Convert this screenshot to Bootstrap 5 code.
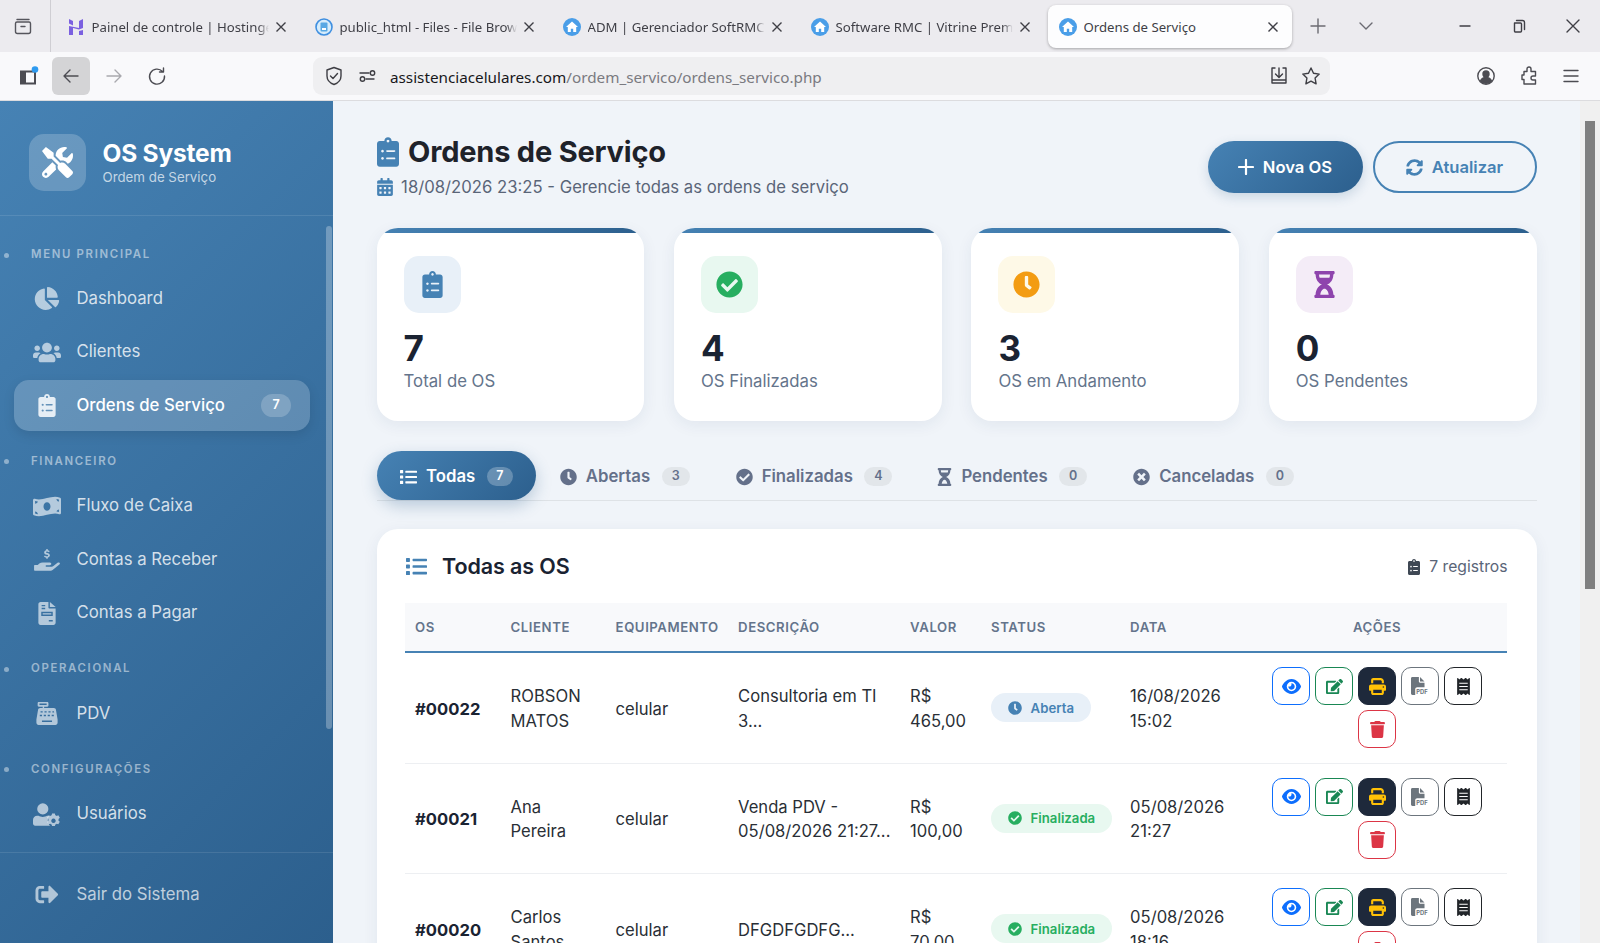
<!DOCTYPE html>
<html lang="pt-BR">
<head>
<meta charset="utf-8">
<title>Ordens de Serviço</title>
<link href="https://cdn.jsdelivr.net/npm/bootstrap@5.3.0/dist/css/bootstrap.min.css" rel="stylesheet">
<style>
html,body{height:943px;overflow:hidden;margin:0}
body{font-family:Inter,"Liberation Sans",sans-serif;background:#f0f4f9;color:#212529;display:flex;flex-direction:column}
svg{fill:currentColor;flex:none;display:block}
/* browser chrome */
.b-tabs{height:52px;background:#ecebef;font-family:"Noto Sans","Liberation Sans",sans-serif;font-size:13.2px;color:#3f3f46;flex:none}
.b-box{width:51px;height:52px;border-right:1px solid #cfced3;color:#55555c;padding-right:4px}
.b-tab{width:244px;height:43px;margin:5px 4px 4px 0;padding:0 13px 0 11px;position:relative;border-radius:8px}
.b-tab.first{margin-left:5px}
.b-tab.on{background:#fdfdfe;box-shadow:0 1px 3px rgba(0,0,0,.3)}
.b-fav{width:18px;height:18px;margin-right:6.5px;margin-top:1px}
.b-txt{flex:1;white-space:nowrap;overflow:hidden;padding-top:2.5px;-webkit-mask-image:linear-gradient(90deg,#000 94%,transparent 100%);mask-image:linear-gradient(90deg,#000 94%,transparent 100%)}
.b-tab.on .b-txt{-webkit-mask-image:none;mask-image:none}
.b-x{width:12px;height:12px;margin-left:6px;color:#3f3f46;fill:none;stroke:currentColor;stroke-width:1.4}
.s-ln{fill:none;stroke:currentColor;stroke-width:1.4;stroke-linecap:round;stroke-linejoin:round}
.b-ctl{width:18px;height:18px;color:#6b6b72}
.b-plus{margin-left:13px;margin-right:30px}
.b-chev{margin-right:81px}
.b-min{margin-right:36px;color:#3f3f46}
.b-res{margin-right:36px;color:#3f3f46}
.b-cl{color:#3f3f46}
.b-bar{height:49px;background:#f9f9fb;border-bottom:1px solid #dcdcdf;flex:none;color:#4c4c52}
.b-ib{width:20px;height:20px}
.b-side{margin-left:19px;margin-right:13px;width:20px}
.b-back{width:38px;height:38px;border-radius:6px;background:#d4d4d6;margin-right:14px}
.b-fwd{color:#a9a9ae;margin-right:23px}
.b-url{width:1017px;height:38px;background:#efeff1;border-radius:9px;margin-left:146px;padding:0 9px 0 11px;font-family:"Noto Sans","Liberation Sans",sans-serif;font-size:15.25px;color:#7a7a80}
.b-url svg{color:#3e3e44}
.b-url b{font-weight:400;color:#17171a}
.b-utxt{padding-top:3px}
.b-url .g1{margin-right:14px}
.b-url .g2{margin-right:12px}
.b-url .g3{margin-right:12px}
.b-acc{margin-left:146px}
.b-ext,.b-mnu{margin-left:22.5px}
/* app */
.app{height:842px;flex:none}
.sidebar{width:333px;background:linear-gradient(135deg,#4682b4,#2c5f8d);color:#fff;flex:none;height:842px}
.side-head{height:115px;padding:33px 0 0 29px;border-bottom:1px solid rgba(255,255,255,.1);flex:none}
.logo-box{width:57px;height:57px;border-radius:15px;background:rgba(255,255,255,.2);margin-right:16.5px}
.logo-box svg{width:31px;height:31px}
.brand{font-size:24.5px;font-weight:700;line-height:30px;letter-spacing:-.2px}
.brand-sub{font-size:13.3px;color:rgba(255,255,255,.7);line-height:18px}
.side-mid{flex:1;min-height:0;overflow:hidden}
.side-nav{flex:1;padding-top:8.5px;overflow:hidden}
.side-bar{width:7px;flex:none}
.side-thumb{width:6px;height:503px;margin-top:10px;border-radius:3px;background:rgba(255,255,255,.28)}
.sec{height:16px;margin:22.5px 0 11px;font-size:11.4px;font-weight:600;letter-spacing:1.66px;color:rgba(255,255,255,.5);text-transform:uppercase}
.sec.s0{margin-bottom:10px}
.sec i{width:5px;height:5px;border-radius:50%;background:rgba(255,255,255,.42);margin:0 22px 0 4px}
.item{height:51px;margin:0 16px 2.5px 14px;padding:0 19px;border-radius:15px;font-size:16.75px;color:rgba(255,255,255,.8);text-decoration:none}
.item svg{width:28px;height:23px;margin-right:15.5px;color:rgba(255,255,255,.62)}
.item.on{background:rgba(255,255,255,.2);color:#fff;font-weight:500;box-shadow:0 4px 12px rgba(0,0,0,.1)}
.item.on svg{color:#e6eef5}
.item-n{width:30px;height:23px;border-radius:12px;background:rgba(255,255,255,.2);font-size:12.5px;font-weight:600;margin-left:auto;margin-right:0}
.side-foot{height:91px;border-top:1px solid rgba(255,255,255,.1);padding-top:16px;flex:none}
.side-foot .item{color:rgba(255,255,255,.7);margin-right:23px}
.main-wrap{flex:1;height:842px;overflow:hidden;min-width:0}
.main{flex:1;min-width:0;overflow:hidden;padding:34px 43.5px 0 43.6px}
.main-bar{width:20px;flex:none;background:#f0f0f0;padding-left:4.5px}
.main-thumb{width:10.5px;height:468px;margin-top:20px;background:#808080}
.ttl{font-size:29px;font-weight:700;line-height:34px;color:#1e222a;margin:0 0 6px;letter-spacing:-.2px}
.ttl svg{width:22px;height:30px;color:#4682b4;margin-right:9.5px}
.subt{font-size:16.7px;line-height:24px;color:#5a6578}
.subt svg{width:16px;height:18px;color:#4682b4;margin-right:8.5px}
.hbtn{height:52px;border-radius:26px;font-size:16.6px;font-weight:600;display:flex;align-items:center;justify-content:center}
.hbtn svg{width:16px;height:16px;margin-right:9px}
.hbtn.a{width:155px;background:linear-gradient(135deg,#4682b4,#2c5f8d);color:#fff;border:0;box-shadow:0 4px 12px rgba(44,95,141,.2)}
.hbtn.b{width:164px;background:transparent;color:#4682b4;border:2px solid #4682b4;margin-left:10px}
.hbtn.b svg{width:17px;height:17px}
.stats{display:grid;grid-template-columns:repeat(4,1fr);gap:29.7px;margin-top:28.5px}
.stat{border:0;border-radius:21px;padding:28.5px 28px 28px 27px;overflow:hidden;box-shadow:0 4px 16px rgba(30,60,100,.07);position:relative;background:#fff}
.stat::before{content:"";position:absolute;left:0;right:0;top:0;height:5px;background:linear-gradient(90deg,#4682b4,#2c5f8d)}
.stat-ic{width:57px;height:57px;border-radius:15px}
.stat-ic svg{width:27px;height:27px}
.sc1{background:#e8f0f8;color:#4682b4}.sc2{background:#e8f8f0;color:#27ae60}.sc3{background:#fef9e7;color:#f39c12}.sc4{background:#f4ecf7;color:#8e44ad}
.stat-n{font-size:35px;font-weight:700;line-height:42px;margin-top:14px;color:#1a2332}
.stat-l{font-size:16.75px;line-height:24px;color:#64748b}
.ptabs{margin-top:30px;border-bottom:1px solid #dee2e6;height:49.5px}
.ptab{height:49px;padding:2px 23px 0;font-size:16.75px;font-weight:600;color:#64708a;border-radius:25px;white-space:nowrap;background:transparent;text-decoration:none}
.ptab svg{width:17px;height:18px;margin-right:9px}
.ptab span{margin-left:11.5px;height:19px;min-width:28px;border-radius:10px;background:#e2e6ea;color:#64708a;font-size:12.5px;font-weight:600;display:flex;align-items:center;justify-content:center}
.ptab.on{color:#fff;background:linear-gradient(135deg,#4682b4,#2c5f8d);box-shadow:0 6px 16px rgba(44,95,141,.28);padding:2px 23.5px 0 23.5px;margin-right:.5px}
.ptab.on span{background:rgba(255,255,255,.25);color:#fff;min-width:26px}
.ptab.tp{margin-left:-1px}
.ptab.tp svg{width:15px}
.tcard{margin-top:28.5px;border:0;border-radius:21px;padding:24px 29px 28px 28.5px;box-shadow:0 4px 16px rgba(30,60,100,.07);background:#fff}
.thead{height:28px;margin-bottom:22px}
.thead h2{font-size:21.5px;font-weight:600;margin:0;color:#1a2332;letter-spacing:-.1px}
.thead h2 svg{width:23px;height:21px;color:#4682b4;margin-right:14px}
.regs{font-size:15.7px;color:#5a6578}
.regs svg{width:12px;height:16px;margin-right:9px;color:#3f4854}
.otable{table-layout:fixed;width:1102px;margin:0;--bs-table-bg:transparent}
.otable th{background:#f8f9fb;font-size:13.2px;font-weight:600;color:#64748b;letter-spacing:.55px;text-transform:uppercase;padding:14px 10px;line-height:20px;border-bottom:2px solid #4682b4;white-space:nowrap}
.otable td{padding:14.25px 10px;font-size:16.6px;line-height:24.5px;vertical-align:middle;border-bottom:1px solid #edeff2;color:#2a2f36}
.otable td.tx{padding-top:16.25px}
.otable td.dsc{white-space:nowrap}
.otable .acts{padding-right:25px}
.otable th.acts{text-align:center}
.oid{font-weight:700;color:#1a2332}
.otable td.oid{color:#1a2332}
.st{display:inline-flex;align-items:center;height:29px;border-radius:15px;padding:0 17px;font-size:13.2px;font-weight:600;white-space:nowrap}
.st svg{width:14px;height:14px;margin-right:8.5px}
.st.ab{background:#e8f0f8;color:#4682b4}
.st.fi{background:#e8f8f0;color:#27ae60}
.acbox{gap:5px}
.ac{width:38px;height:38px;padding:0;border-radius:10px;display:flex;align-items:center;justify-content:center;--bs-btn-bg:#fff}
.ac svg{width:17px;height:17px}
.ac.pr{background:#1e293b;border-color:#1e293b;color:#ffc107}
.ac.pd{color:#6c757d}
.ac.re{color:#212529}
.ac.ey svg{width:19px}
.ac.pd svg{width:18px;height:18px}
</style>
</head>
<body>
<svg width="0" height="0" class="position-absolute">
<defs>
<symbol id="tools" viewBox="0 0 512 512"><path d="M501.1 395.7L384 278.6c-23.1-23.1-57.6-27.6-85.4-13.9L192 158.1V96L64 0 0 64l96 128h62.1l106.6 106.6c-13.6 27.8-9.2 62.3 13.9 85.4l117.1 117.1c14.6 14.6 38.2 14.6 52.7 0l52.7-52.7c14.5-14.6 14.5-38.2 0-52.7zM331.7 225c28.3 0 54.9 11 74.9 31l19.4 19.4c15.8-6.9 30.8-16.5 43.8-29.5 37.1-37.1 49.7-89.3 37.9-136.7-2.2-9-13.5-12.1-20.1-5.5l-74.4 74.4-67.9-11.3L334 98.9l74.4-74.4c6.6-6.6 3.4-17.9-5.7-20.2-47.4-11.7-99.6.9-136.6 37.9-28.5 28.5-41.9 66.1-41.2 103.6l82.1 82.1c8.1-1.9 16.5-2.9 24.7-2.9zm-103.9 82l-56.7-56.7L18.7 402.8c-25 25-25 65.5 0 90.5s65.5 25 90.5 0l123.6-123.6c-7.6-19.9-9.9-41.6-5-62.7zM64 472c-13.2 0-24-10.8-24-24 0-13.3 10.7-24 24-24s24 10.7 24 24c0 13.2-10.7 24-24 24z"/></symbol>
<symbol id="pie" viewBox="0 0 544 512"><path d="M527.79 288H290.5l158.03 158.03c6.04 6.04 15.98 6.53 22.19.68 38.7-36.46 65.32-85.61 73.13-140.86 1.34-9.46-6.51-17.85-16.06-17.85zm-15.83-64.8C503.72 103.74 408.26 8.28 288.8.04 279.68-.59 272 7.1 272 16.24V240h223.77c9.14 0 16.82-7.68 16.19-16.8zM224 288V50.71c0-9.55-8.39-17.4-17.84-16.06C86.99 51.49-4.1 155.6.14 280.37 4.5 408.51 114.83 513.59 243.03 511.98c50.4-.63 96.97-16.87 135.26-44.03 7.9-5.6 8.42-17.23 1.57-24.08L224 288z"/></symbol>
<symbol id="users" viewBox="0 0 640 512"><path d="M96 224c35.3 0 64-28.7 64-64s-28.7-64-64-64-64 28.7-64 64 28.7 64 64 64zm448 0c35.3 0 64-28.7 64-64s-28.7-64-64-64-64 28.7-64 64 28.7 64 64 64zm32 32h-64c-17.6 0-33.5 7.1-45.1 18.6 40.3 22.1 68.9 62 75.1 109.4h66c17.7 0 32-14.3 32-32v-32c0-35.3-28.7-64-64-64zm-256 0c61.9 0 112-50.1 112-112S381.9 32 320 32 208 82.1 208 144s50.1 112 112 112zm76.8 32h-8.3c-20.8 10-43.9 16-68.5 16s-47.6-6-68.5-16h-8.3C179.6 288 128 339.6 128 403.2V432c0 26.5 21.5 48 48 48h288c26.5 0 48-21.5 48-48v-28.8c0-63.6-51.6-115.2-115.2-115.2zm-223.7-13.4C161.5 263.1 145.6 256 128 256H64c-35.3 0-64 28.7-64 64v32c0 17.7 14.3 32 32 32h65.9c6.3-47.4 34.9-87.3 75.2-109.4z"/></symbol>
<symbol id="clip" viewBox="0 0 384 512"><path fill-rule="evenodd" d="M48 64h80c0-35.3 28.7-64 64-64s64 28.7 64 64h80c26.5 0 48 21.5 48 48v352c0 26.5-21.500 48-48 48H48c-26.500 0-48-21.500-48-48V112c0-26.500 21.500-48 48-48zM192 40a24 24 0 1 0 .1 0zM96 216a24 24 0 1 0 .1 0zM96 344a24 24 0 1 0 .1 0zM176 224h128c8.800 0 16 7.200 16 16s-7.200 16-16 16H176c-8.800 0-16-7.200-16-16s7.200-16 16-16zM176 352h128c8.800 0 16 7.200 16 16s-7.200 16-16 16H176c-8.800 0-16-7.200-16-16s7.200-16 16-16z"/></symbol>
<symbol id="money" viewBox="0 0 640 512"><path d="M621.16 54.46C582.37 38.19 543.55 32 504.75 32c-123.17-.01-246.33 62.34-369.5 62.34-30.89 0-61.76-3.92-92.65-13.72-3.47-1.1-6.95-1.62-10.35-1.62C15.04 79 0 92.32 0 110.81v317.26c0 12.63 7.23 24.6 18.84 29.46C57.63 473.81 96.45 480 135.25 480c123.17 0 246.34-62.35 369.51-62.35 30.89 0 61.76 3.92 92.65 13.72 3.47 1.1 6.95 1.62 10.35 1.62 17.21 0 32.25-13.32 32.25-31.81V83.93c-.01-12.64-7.24-24.6-18.85-29.47zM48 132.22c20.12 5.04 41.12 7.57 62.72 8.93C104.84 170.54 79 192.69 48 192.69v-60.47zm0 285v-47.78c34.37 0 62.18 27.27 63.71 61.4-22.53-1.81-43.59-6.31-63.71-13.62zM320 352c-44.19 0-80-42.99-80-96 0-53.02 35.82-96 80-96s80 42.98 80 96c0 53.03-35.83 96-80 96zm272 27.78c-17.52-4.39-35.71-6.85-54.32-8.44 5.87-26.08 27.5-45.88 54.32-49.28v57.72zm0-236.11c-30.89-3.91-54.86-29.7-55.81-61.55 19.54 2.17 38.09 6.23 55.81 12.66v48.89z"/></symbol>
<symbol id="hand" viewBox="0 0 576 512"><path d="M565.300 328.100c-11.800-10.700-30.200-10-42.600 0L430.300 402c-11.300 9.100-25.400 14-40 14H272c-8.800 0-16-7.200-16-16s7.200-16 16-16h78.300c15.900 0 30.700-10.900 33.300-26.600 3.300-20-12.100-37.400-31.600-37.400H192c-27 0-53.100 9.300-74.100 26.300L81.500 376H16c-8.800 0-16 7.200-16 16v96c0 8.800 7.200 16 16 16h356.700c14.500 0 28.600-4.900 40-14l151.200-121c15.200-12.200 16.400-35.100 1.400-40.900z"/><path d="M272 20h32v28c18 3 34 11 45 22l-22 24c-10-9-24-16-40-16-13 0-22 5-22 14 0 8 7 12 26 17 32 8 62 19 62 55 0 28-20 46-49 52v26h-32v-26c-21-3-40-13-52-26l22-24c12 11 28 20 46 20 15 0 25-6 25-16 0-9-8-14-28-19-30-8-60-18-60-53 0-26 19-45 47-50z"/></symbol>
<symbol id="fileinv" viewBox="0 0 384 512"><path fill-rule="evenodd" d="M48 0h176v120c0 13.300 10.700 24 24 24h136v320c0 26.500-21.500 48-48 48H48c-26.500 0-48-21.500-48-48V48C0 21.500 21.500 0 48 0zM72 64h80v32H72zM72 128h80v32H72zM64 216v96h256v-96zM96 248h192v32H96zM232 400h88v32h-88zM256 0l128 112H256z"/></symbol>
<symbol id="cash" viewBox="0 0 512 512"><path fill-rule="evenodd" d="M72 0h192c13 0 24 11 24 24v56c0 13-11 24-24 24h-72v32h216c24 0 45 17 48 40l36 216v72c0 26-22 48-48 48H68c-26 0-48-22-48-48v-72l36-216c3-23 24-40 48-40h56v-32H72c-13 0-24-11-24-24V24C48 11 59 0 72 0zM88 36v32h160V36zM112 204v32h48v-32zM200 204v32h48v-32zM288 204v32h48v-32zM96 284v32h48v-32zM184 284v32h48v-32zM272 284v32h48v-32zM360 284v32h48v-32zM376 204v32h40l-6-32zM144 412v32h224v-32z"/></symbol>
<symbol id="usercog" viewBox="0 0 640 512"><circle cx="224" cy="128" r="128"/><path d="M360 288c-14-1-24-1-40-1-24 12-60 25-96 25s-72-13-96-25h-33C42 287 0 330 0 382v82c0 26 22 48 48 48h342c-32-25-52-62-52-112 0-44 8-82 22-112z"/><path fill-rule="evenodd" d="M500 232l10 40c12 3 22 9 31 16l38-13 34 58-30 27c2 12 2 24 0 36l30 27-34 58-38-13c-9 7-19 13-31 16l-10 40h-64l-10-40c-12-3-22-9-31-16l-38 13-34-58 30-27c-2-12-2-24 0-36l-30-27 34-58 38 13c9-7 19-13 31-16l10-40zM468 350a50 50 0 1 0 .1 0z"/></symbol>
<symbol id="out" viewBox="0 0 512 512"><path d="M497 273L329 441c-15 15-41 4.500-41-17v-96H152c-13.300 0-24-10.700-24-24v-96c0-13.300 10.700-24 24-24h136V88c0-21.400 25.900-32 41-17l168 168c9.300 9.400 9.300 24.600 0 34zM192 436v-40c0-6.600-5.400-12-12-12H96c-17.700 0-32-14.300-32-32V160c0-17.700 14.300-32 32-32h84c6.600 0 12-5.400 12-12V76c0-6.600-5.400-12-12-12H96c-53 0-96 43-96 96v192c0 53 43 96 96 96h84c6.600 0 12-5.400 12-12z"/></symbol>
<symbol id="cal" viewBox="0 0 448 512"><path d="M0 464c0 26.500 21.500 48 48 48h352c26.500 0 48-21.500 48-48V192H0v272zm320-196c0-6.600 5.400-12 12-12h40c6.600 0 12 5.400 12 12v40c0 6.600-5.400 12-12 12h-40c-6.600 0-12-5.400-12-12v-40zm0 128c0-6.600 5.400-12 12-12h40c6.600 0 12 5.400 12 12v40c0 6.600-5.400 12-12 12h-40c-6.600 0-12-5.400-12-12v-40zM192 268c0-6.600 5.400-12 12-12h40c6.600 0 12 5.400 12 12v40c0 6.600-5.400 12-12 12h-40c-6.600 0-12-5.400-12-12v-40zm0 128c0-6.600 5.400-12 12-12h40c6.600 0 12 5.400 12 12v40c0 6.600-5.400 12-12 12h-40c-6.600 0-12-5.400-12-12v-40zM64 268c0-6.600 5.400-12 12-12h40c6.600 0 12 5.400 12 12v40c0 6.600-5.400 12-12 12H76c-6.600 0-12-5.400-12-12v-40zm0 128c0-6.600 5.400-12 12-12h40c6.600 0 12 5.400 12 12v40c0 6.600-5.400 12-12 12H76c-6.600 0-12-5.400-12-12v-40zM400 64h-48V16c0-8.800-7.200-16-16-16h-32c-8.800 0-16 7.200-16 16v48H160V16c0-8.800-7.200-16-16-16h-32c-8.800 0-16 7.200-16 16v48H48C21.500 64 0 85.500 0 112v48h448v-48c0-26.500-21.500-48-48-48z"/></symbol>
<symbol id="plus" viewBox="0 0 16 16"><path d="M8 1v14M1 8h14" fill="none" stroke="currentColor" stroke-width="2.200" stroke-linecap="round"/></symbol>
<symbol id="sync" viewBox="0 0 512 512"><path d="M370.720 133.280C339.458 104.008 298.888 87.962 255.848 88c-77.458.068-144.328 53.178-162.791 126.850-1.344 5.363-6.122 9.150-11.651 9.150H24.103c-7.498 0-13.194-6.807-11.807-14.176C33.933 94.924 134.813 8 256 8c66.448 0 126.791 26.136 171.315 68.685L463.030 40.970C478.149 25.851 504 36.559 504 57.941V192c0 13.255-10.745 24-24 24H345.941c-21.382 0-32.090-25.851-16.971-40.971l41.750-41.749zM32 296h134.059c21.382 0 32.090 25.851 16.971 40.971l-41.750 41.750c31.262 29.273 71.835 45.319 114.876 45.280 77.418-.07 144.315-53.144 162.787-126.849 1.344-5.363 6.122-9.150 11.651-9.150h57.304c7.498 0 13.194 6.807 11.807 14.176C478.067 417.076 377.187 504 256 504c-66.448 0-126.791-26.136-171.315-68.685L48.970 471.030C33.851 486.149 8 475.441 8 454.059V320c0-13.255 10.745-24 24-24z"/></symbol>
<symbol id="check" viewBox="0 0 512 512"><path d="M504 256c0 136.967-111.033 248-248 248S8 392.967 8 256 119.033 8 256 8s248 111.033 248 248zM227.314 387.314l184-184c6.248-6.248 6.248-16.379 0-22.627l-22.627-22.627c-6.248-6.249-16.379-6.249-22.628 0L216 308.118l-70.059-70.059c-6.248-6.248-16.379-6.248-22.628 0l-22.627 22.627c-6.248 6.248-6.248 16.379 0 22.627l104 104c6.249 6.249 16.379 6.249 22.628.001z"/></symbol>
<symbol id="clock" viewBox="0 0 512 512"><path d="M256,8C119,8,8,119,8,256S119,504,256,504,504,393,504,256,393,8,256,8Zm92.490,313h0l-20,25a16,16,0,0,1-22.490,2.500h0l-67-49.720a40,40,0,0,1-15-31.230V112a16,16,0,0,1,16-16h32a16,16,0,0,1,16,16V256l58,42.500A16,16,0,0,1,348.490,321Z"/></symbol>
<symbol id="timesc" viewBox="0 0 512 512"><path d="M256 8C119 8 8 119 8 256s111 248 248 248 248-111 248-248S393 8 256 8zm121.600 313.100c4.700 4.700 4.700 12.300 0 17L338 377.600c-4.700 4.700-12.300 4.700-17 0L256 312l-65.100 65.600c-4.700 4.700-12.300 4.700-17 0L134.400 338c-4.700-4.700-4.700-12.300 0-17l65.600-65-65.600-65.100c-4.700-4.700-4.700-12.300 0-17l39.600-39.600c4.700-4.700 12.300-4.700 17 0l65 65.700 65.100-65.600c4.700-4.700 12.300-4.700 17 0l39.600 39.600c4.700 4.700 4.700 12.300 0 17L312 256l65.600 65.100z"/></symbol>
<symbol id="hour" viewBox="0 0 384 512"><path fill-rule="evenodd" d="M360 0H24C10.745 0 0 10.745 0 24v16c0 13.255 10.745 24 24 24 0 90.965 51.016 167.734 120.842 192C75.016 280.266 24 357.035 24 448c-13.255 0-24 10.745-24 24v16c0 13.255 10.745 24 24 24h336c13.255 0 24-10.745 24-24v-16c0-13.255-10.745-24-24-24 0-90.965-51.016-167.734-120.842-192C308.984 231.734 360 154.965 360 64c13.255 0 24-10.745 24-24V24c0-13.255-10.745-24-24-24zM88 64h208c0 24-4 44-12 64H100c-8-20-12-40-12-64zM192 336c-36 0-72 50-80 112h160c-8-62-44-112-80-112z"/></symbol>
<symbol id="list" viewBox="0 0 512 512"><path d="M80 368H16a16 16 0 0 0-16 16v64a16 16 0 0 0 16 16h64a16 16 0 0 0 16-16v-64a16 16 0 0 0-16-16zm0-320H16A16 16 0 0 0 0 64v64a16 16 0 0 0 16 16h64a16 16 0 0 0 16-16V64a16 16 0 0 0-16-16zm0 160H16a16 16 0 0 0-16 16v64a16 16 0 0 0 16 16h64a16 16 0 0 0 16-16v-64a16 16 0 0 0-16-16zm416 176H176a16 16 0 0 0-16 16v32a16 16 0 0 0 16 16h320a16 16 0 0 0 16-16v-32a16 16 0 0 0-16-16zm0-320H176a16 16 0 0 0-16 16v32a16 16 0 0 0 16 16h320a16 16 0 0 0 16-16V80a16 16 0 0 0-16-16zm0 160H176a16 16 0 0 0-16 16v32a16 16 0 0 0 16 16h320a16 16 0 0 0 16-16v-32a16 16 0 0 0-16-16z"/></symbol>
<symbol id="eye" viewBox="0 0 576 512"><path d="M288 32c-80.800 0-145.500 36.800-192.600 80.600C48.600 156 17.300 208 2.500 243.700c-3.300 7.900-3.300 16.700 0 24.600C17.300 304 48.600 356 95.400 399.400C142.500 443.200 207.200 480 288 480s145.500-36.800 192.600-80.600c46.800-43.500 78.100-95.400 93-131.100c3.300-7.900 3.300-16.700 0-24.600c-14.900-35.700-46.200-87.700-93-131.100C433.500 68.800 368.800 32 288 32zM144 256a144 144 0 1 1 288 0 144 144 0 1 1 -288 0zm144-64c0 35.300-28.700 64-64 64c-7.100 0-13.900-1.200-20.300-3.300c-5.500-1.800-11.900 1.600-11.700 7.400c.3 6.900 1.300 13.800 3.200 20.700c13.700 51.200 66.400 81.600 117.600 67.900s81.600-66.400 67.900-117.600c-11.100-41.500-47.800-69.400-88.600-71.100c-5.800-.2-9.200 6.100-7.400 11.700c2.100 6.400 3.300 13.200 3.300 20.300z"/></symbol>
<symbol id="edit" viewBox="0 0 576 512"><path d="M402.600 83.200l90.200 90.200c3.800 3.800 3.800 10 0 13.800L274.400 405.600l-92.800 10.300c-12.400 1.400-22.900-9.100-21.500-21.500l10.300-92.800L388.800 83.200c3.800-3.800 10-3.800 13.800 0zm162-22.900l-48.800-48.800c-15.200-15.200-39.900-15.200-55.200 0l-35.400 35.400c-3.800 3.800-3.800 10 0 13.800l90.200 90.200c3.800 3.800 10 3.800 13.800 0l35.400-35.400c15.200-15.300 15.200-40 0-55.200zM384 346.200V448H64V128h229.800c3.200 0 6.200-1.300 8.500-3.500l40-40c7.600-7.600 2.200-20.500-8.500-20.500H48C21.500 64 0 85.500 0 112v352c0 26.500 21.500 48 48 48h352c26.500 0 48-21.500 48-48V306.200c0-10.700-12.900-16-20.500-8.500l-40 40c-2.200 2.300-3.500 5.300-3.500 8.500z"/></symbol>
<symbol id="print" viewBox="0 0 512 512"><path d="M128 0C92.700 0 64 28.700 64 64v96h64V64H354.700L384 93.300V160h64V93.300c0-17-6.700-33.300-18.700-45.300L400 18.700C388 6.700 371.700 0 354.700 0H128zM384 352v32 64H128V384 368 352H384zm64 32h32c17.700 0 32-14.300 32-32V256c0-35.300-28.700-64-64-64H64c-35.300 0-64 28.700-64 64v96c0 17.700 14.300 32 32 32H64v64c0 35.300 28.700 64 64 64H384c35.300 0 64-28.700 64-64V384zM432 248a24 24 0 1 1 0 48 24 24 0 1 1 0-48z"/></symbol>
<symbol id="pdf" viewBox="0 0 512 512"><path d="M40 0h184v128c0 17.700 14.300 32 32 32h128v128H176c-30 0-56 26-56 56v168H40c-22 0-40-18-40-40V40C0 18 18 0 40 0zM256 0l128 128H256z"/><text x="150" y="480" font-family="Inter,'Liberation Sans',sans-serif" font-size="165" font-weight="700">PDF</text></symbol>
<symbol id="receipt" viewBox="0 0 384 512"><path d="M358.400 3.200L320 48 265.600 3.200a15.900 15.900 0 0 0-19.200 0L192 48 137.600 3.200a15.900 15.900 0 0 0-19.200 0L64 48 25.600 3.200C15-4.700 0 2.800 0 16v480c0 13.200 15 20.700 25.600 12.800L64 464l54.400 44.800a15.900 15.900 0 0 0 19.200 0L192 464l54.400 44.800a15.900 15.900 0 0 0 19.200 0L320 464l38.400 44.800c10.500 7.900 25.600.4 25.600-12.800V16c0-13.200-15-20.700-25.600-12.800zM320 360c0 4.400-3.600 8-8 8H72c-4.400 0-8-3.600-8-8v-16c0-4.400 3.600-8 8-8h240c4.400 0 8 3.600 8 8v16zm0-96c0 4.400-3.600 8-8 8H72c-4.400 0-8-3.600-8-8v-16c0-4.400 3.600-8 8-8h240c4.400 0 8 3.600 8 8v16zm0-96c0 4.400-3.600 8-8 8H72c-4.400 0-8-3.600-8-8v-16c0-4.400 3.600-8 8-8h240c4.400 0 8 3.600 8 8v16z"/></symbol>
<symbol id="trash" viewBox="0 0 448 512"><path d="M135.200 17.700L128 32H32C14.300 32 0 46.300 0 64S14.300 96 32 96H416c17.700 0 32-14.300 32-32s-14.300-32-32-32H320l-7.200-14.300C307.400 6.800 296.300 0 284.200 0H163.800c-12.100 0-23.200 6.800-28.600 17.700zM416 128H32L53.200 467c1.600 25.300 22.600 45 47.900 45H346.900c25.300 0 46.300-19.700 47.900-45L416 128z"/></symbol>
<symbol id="house" viewBox="0 0 18 18"><circle cx="9" cy="9" r="9" fill="#4a9ee8"/><path d="M9 3.500L3 9h1.800v5h3v-3.200h2.400V14h3V9H15z" fill="#fff"/></symbol>
<symbol id="fb" viewBox="0 0 18 18"><circle cx="9" cy="9" r="8" fill="#d6ecfb" stroke="#3f8fe0" stroke-width="1.600"/><rect x="5.500" y="4.500" width="7" height="9" rx="1" fill="#58a8e4"/><rect x="7" y="10" width="4" height="2" fill="#fff"/></symbol>
<symbol id="hg" viewBox="0 0 18 18"><path d="M2 1l4 2v4.500l-4-2zM2 8l10 2V3l4-2v9l-4 1.500L6 10v7H2zM12 13l4-1v5h-4z" fill="#7b60e0"/></symbol>
<symbol id="xx" viewBox="0 0 12 12"><path d="M1.500 1.500l9 9M10.500 1.500l-9 9"/></symbol>
</defs>
</svg>

<div class="b-tabs d-flex align-items-start">
  <div class="b-box d-flex align-items-center justify-content-center flex-none">
    <svg width="20" height="20" viewBox="0 0 20 20" class="s-ln"><path d="M4 3.500h12M2.500 7.500a1.500 1.500 0 0 1 1.500-1.500h12a1.500 1.500 0 0 1 1.500 1.500v8a2 2 0 0 1-2 2h-11a2 2 0 0 1-2-2zM8 10.500h4"/></svg>
  </div>
  <div class="b-tab first d-flex align-items-center"><svg class="b-fav"><use href="#hg"/></svg><div class="b-txt">Painel de controle | Hostinger</div><svg class="b-x"><use href="#xx"/></svg></div>
  <div class="b-tab d-flex align-items-center"><svg class="b-fav"><use href="#fb"/></svg><div class="b-txt">public_html - Files - File Browser</div><svg class="b-x"><use href="#xx"/></svg></div>
  <div class="b-tab d-flex align-items-center"><svg class="b-fav"><use href="#house"/></svg><div class="b-txt">ADM | Gerenciador SoftRMC</div><svg class="b-x"><use href="#xx"/></svg></div>
  <div class="b-tab d-flex align-items-center"><svg class="b-fav"><use href="#house"/></svg><div class="b-txt">Software RMC | Vitrine Premium</div><svg class="b-x"><use href="#xx"/></svg></div>
  <div class="b-tab on d-flex align-items-center"><svg class="b-fav"><use href="#house"/></svg><div class="b-txt">Ordens de Serviço</div><svg class="b-x"><use href="#xx"/></svg></div>
  <div class="d-flex align-items-center align-self-center">
    <svg class="b-ctl b-plus s-ln" viewBox="0 0 18 18"><path d="M9 2v14M2 9h14"/></svg>
    <svg class="b-ctl b-chev s-ln" viewBox="0 0 18 18"><path d="M3 6l6 6 6-6"/></svg>
    <svg class="b-ctl b-min s-ln" viewBox="0 0 18 18"><path d="M4 9h10"/></svg>
    <svg class="b-ctl b-res s-ln" viewBox="0 0 18 18"><path d="M6.500 3.500h6a2 2 0 0 1 2 2v7M4.500 6h6a1 1 0 0 1 1 1v7a1 1 0 0 1-1 1h-5a1 1 0 0 1-1-1z"/></svg>
    <svg class="b-ctl b-cl s-ln" viewBox="0 0 18 18"><path d="M3 3l12 12M15 3L3 15"/></svg>
  </div>
</div>
<div class="b-bar d-flex align-items-center">
  <svg class="b-ib b-side" viewBox="0 0 20 20"><path d="M2 5.500h14v12H2z" fill="none" stroke="currentColor" stroke-width="2"/><path d="M2 5h5v13H2z"/><circle cx="16" cy="3.500" r="3.300" fill="#2f9bf0"/></svg>
  <div class="b-back d-flex align-items-center justify-content-center"><svg class="b-ib s-ln" viewBox="0 0 20 20"><path d="M17 10H3M9 4l-6 6 6 6"/></svg></div>
  <svg class="b-ib b-fwd s-ln" viewBox="0 0 20 20"><path d="M3 10h14M11 4l6 6-6 6"/></svg>
  <svg class="b-ib s-ln" viewBox="0 0 20 20"><path d="M15.500 5.500A7.500 7.500 0 1 0 17.500 10M16.500 2v4h-4"/></svg>
  <div class="b-url d-flex align-items-center">
    <svg class="b-ib g1 s-ln" viewBox="0 0 20 20"><path d="M10 1.500l7 2.500v6c0 4-3 7-7 8.500-4-1.500-7-4.500-7-8.500V4zM6.500 10l2.500 2.500 4.500-5"/></svg>
    <svg class="b-ib g2 s-ln" viewBox="0 0 20 20"><path d="M2 7h9M16 13H8"/><circle cx="14.500" cy="7" r="2.200"/><circle cx="4.500" cy="13" r="2.200"/></svg>
    <div class="flex-grow-1 b-utxt"><b>assistenciacelulares.com</b>/ordem_servico/ordens_servico.php</div>
    <svg class="b-ib g3 s-ln" viewBox="0 0 20 20"><path d="M6 2H3v15h14V2h-3M10 2v9M6.500 8l3.500 3.500L13.500 8M3 14h14"/></svg>
    <svg class="b-ib s-ln" viewBox="0 0 20 20"><path d="M10 2l2.500 5.300 5.700.8-4.100 4 1 5.700L10 15.100l-5.100 2.700 1-5.700-4.100-4 5.700-.8z"/></svg>
  </div>
  <svg class="b-ib s-ln b-acc" viewBox="0 0 20 20"><circle cx="10" cy="10" r="8.200"/><circle cx="10" cy="8" r="3" fill="currentColor"/><path d="M4.500 15c1-2.500 3-3.500 5.500-3.500s4.500 1 5.500 3.500a8 8 0 0 1-11 0z" fill="currentColor"/></svg>
  <svg class="b-ib s-ln b-ext" viewBox="0 0 20 20"><path d="M8 3a2 2 0 0 1 4 0v2.500h4.500V10H14a2 2 0 0 0 0 4h2.500v4H5v-4.500H3V9h2V5.500h3z"/></svg>
  <svg class="b-ib s-ln b-mnu" viewBox="0 0 20 20"><path d="M3 4.500h14M3 10h14M3 15.500h14"/></svg>
</div>

<div class="app d-flex">
  <aside class="sidebar d-flex flex-column">
    <div class="side-head d-flex align-items-start">
      <div class="logo-box d-flex align-items-center justify-content-center"><svg><use href="#tools"/></svg></div>
      <div class="pt-1"><div class="brand">OS System</div><div class="brand-sub">Ordem de Serviço</div></div>
    </div>
    <div class="side-mid d-flex">
    <nav class="side-nav">
      <div class="sec s0 d-flex align-items-center"><i></i>Menu Principal</div>
      <a class="item d-flex align-items-center" href="#"><svg><use href="#pie"/></svg>Dashboard</a>
      <a class="item d-flex align-items-center" href="#"><svg><use href="#users"/></svg>Clientes</a>
      <a class="item on d-flex align-items-center" href="#"><svg><use href="#clip"/></svg>Ordens de Serviço<span class="item-n d-flex align-items-center justify-content-center">7</span></a>
      <div class="sec d-flex align-items-center"><i></i>Financeiro</div>
      <a class="item d-flex align-items-center" href="#"><svg><use href="#money"/></svg>Fluxo de Caixa</a>
      <a class="item d-flex align-items-center" href="#"><svg><use href="#hand"/></svg>Contas a Receber</a>
      <a class="item d-flex align-items-center" href="#"><svg><use href="#fileinv"/></svg>Contas a Pagar</a>
      <div class="sec d-flex align-items-center"><i></i>Operacional</div>
      <a class="item d-flex align-items-center" href="#"><svg><use href="#cash"/></svg>PDV</a>
      <div class="sec d-flex align-items-center"><i></i>Configurações</div>
      <a class="item d-flex align-items-center" href="#"><svg><use href="#usercog"/></svg>Usuários</a>
    </nav>
    <div class="side-bar"><div class="side-thumb"></div></div>
    </div>
    <div class="side-foot">
      <a class="item d-flex align-items-center" href="#"><svg><use href="#out"/></svg>Sair do Sistema</a>
    </div>
  </aside>

  <div class="main-wrap d-flex">
  <main class="main">
    <div class="d-flex justify-content-between align-items-center">
      <div>
        <h1 class="ttl d-flex align-items-center"><svg><use href="#clip"/></svg>Ordens de Serviço</h1>
        <div class="subt d-flex align-items-center"><svg><use href="#cal"/></svg>18/08/2026 23:25 - Gerencie todas as ordens de serviço</div>
      </div>
      <div class="d-flex">
        <button class="btn hbtn a"><svg><use href="#plus"/></svg>Nova OS</button>
        <button class="btn hbtn b"><svg><use href="#sync"/></svg>Atualizar</button>
      </div>
    </div>

    <div class="stats">
      <div class="card stat"><div class="stat-ic sc1 d-flex align-items-center justify-content-center"><svg><use href="#clip"/></svg></div><div class="stat-n">7</div><div class="stat-l">Total de OS</div></div>
      <div class="card stat"><div class="stat-ic sc2 d-flex align-items-center justify-content-center"><svg><use href="#check"/></svg></div><div class="stat-n">4</div><div class="stat-l">OS Finalizadas</div></div>
      <div class="card stat"><div class="stat-ic sc3 d-flex align-items-center justify-content-center"><svg><use href="#clock"/></svg></div><div class="stat-n">3</div><div class="stat-l">OS em Andamento</div></div>
      <div class="card stat"><div class="stat-ic sc4 d-flex align-items-center justify-content-center"><svg><use href="#hour"/></svg></div><div class="stat-n">0</div><div class="stat-l">OS Pendentes</div></div>
    </div>

    <div class="ptabs nav d-flex align-items-start">
      <a class="ptab on d-flex align-items-center" href="#"><svg><use href="#list"/></svg>Todas<span>7</span></a>
      <a class="ptab d-flex align-items-center" href="#"><svg><use href="#clock"/></svg>Abertas<span>3</span></a>
      <a class="ptab d-flex align-items-center" href="#"><svg><use href="#check"/></svg>Finalizadas<span>4</span></a>
      <a class="ptab tp d-flex align-items-center" href="#"><svg><use href="#hour"/></svg>Pendentes<span>0</span></a>
      <a class="ptab d-flex align-items-center" href="#"><svg><use href="#timesc"/></svg>Canceladas<span>0</span></a>
    </div>

    <div class="card tcard">
      <div class="thead d-flex justify-content-between align-items-center">
        <h2 class="d-flex align-items-center"><svg><use href="#list"/></svg>Todas as OS</h2>
        <div class="regs d-flex align-items-center"><svg><use href="#clip"/></svg>7 registros</div>
      </div>
      <table class="table otable">
        <colgroup><col width="95.5"><col width="105"><col width="122.5"><col width="172"><col width="81"><col width="139"><col width="142"><col width="245"></colgroup>
        <thead><tr><th>OS</th><th>Cliente</th><th>Equipamento</th><th>Descrição</th><th>Valor</th><th>Status</th><th>Data</th><th class="acts">Ações</th></tr></thead>
        <tbody>
          <tr><td class="tx oid">#00022</td><td class="tx">ROBSON MATOS</td><td class="tx">celular</td><td class="tx dsc">Consultoria em TI<br>3...</td><td class="tx">R$ 465,00</td><td><span class="st ab"><svg><use href="#clock"/></svg>Aberta</span></td><td class="tx">16/08/2026 15:02</td>
            <td class="acts"><div class="acbox d-flex flex-wrap justify-content-center">
              <button class="btn btn-outline-primary ac ey"><svg><use href="#eye"/></svg></button><button class="btn btn-outline-success ac"><svg><use href="#edit"/></svg></button><button class="btn ac pr"><svg><use href="#print"/></svg></button><button class="btn btn-outline-secondary ac pd"><svg><use href="#pdf"/></svg></button><button class="btn btn-outline-dark ac re"><svg><use href="#receipt"/></svg></button><button class="btn btn-outline-danger ac"><svg><use href="#trash"/></svg></button></div></td></tr>
          <tr><td class="tx oid">#00021</td><td class="tx">Ana Pereira</td><td class="tx">celular</td><td class="tx dsc">Venda PDV -<br>05/08/2026 21:27...</td><td class="tx">R$ 100,00</td><td><span class="st fi"><svg><use href="#check"/></svg>Finalizada</span></td><td class="tx">05/08/2026 21:27</td>
            <td class="acts"><div class="acbox d-flex flex-wrap justify-content-center">
              <button class="btn btn-outline-primary ac ey"><svg><use href="#eye"/></svg></button><button class="btn btn-outline-success ac"><svg><use href="#edit"/></svg></button><button class="btn ac pr"><svg><use href="#print"/></svg></button><button class="btn btn-outline-secondary ac pd"><svg><use href="#pdf"/></svg></button><button class="btn btn-outline-dark ac re"><svg><use href="#receipt"/></svg></button><button class="btn btn-outline-danger ac"><svg><use href="#trash"/></svg></button></div></td></tr>
          <tr><td class="tx oid">#00020</td><td class="tx">Carlos Santos</td><td class="tx">celular</td><td class="tx dsc">DFGDFGDFG...</td><td class="tx">R$ 70,00</td><td><span class="st fi"><svg><use href="#check"/></svg>Finalizada</span></td><td class="tx">05/08/2026 18:16</td>
            <td class="acts"><div class="acbox d-flex flex-wrap justify-content-center">
              <button class="btn btn-outline-primary ac ey"><svg><use href="#eye"/></svg></button><button class="btn btn-outline-success ac"><svg><use href="#edit"/></svg></button><button class="btn ac pr"><svg><use href="#print"/></svg></button><button class="btn btn-outline-secondary ac pd"><svg><use href="#pdf"/></svg></button><button class="btn btn-outline-dark ac re"><svg><use href="#receipt"/></svg></button><button class="btn btn-outline-danger ac"><svg><use href="#trash"/></svg></button></div></td></tr>
        </tbody>
      </table>
    </div>
  </main>
  <div class="main-bar"><div class="main-thumb"></div></div>
  </div>
</div>
<script src="https://cdn.jsdelivr.net/npm/bootstrap@5.3.0/dist/js/bootstrap.bundle.min.js"></script>
</body>
</html>
